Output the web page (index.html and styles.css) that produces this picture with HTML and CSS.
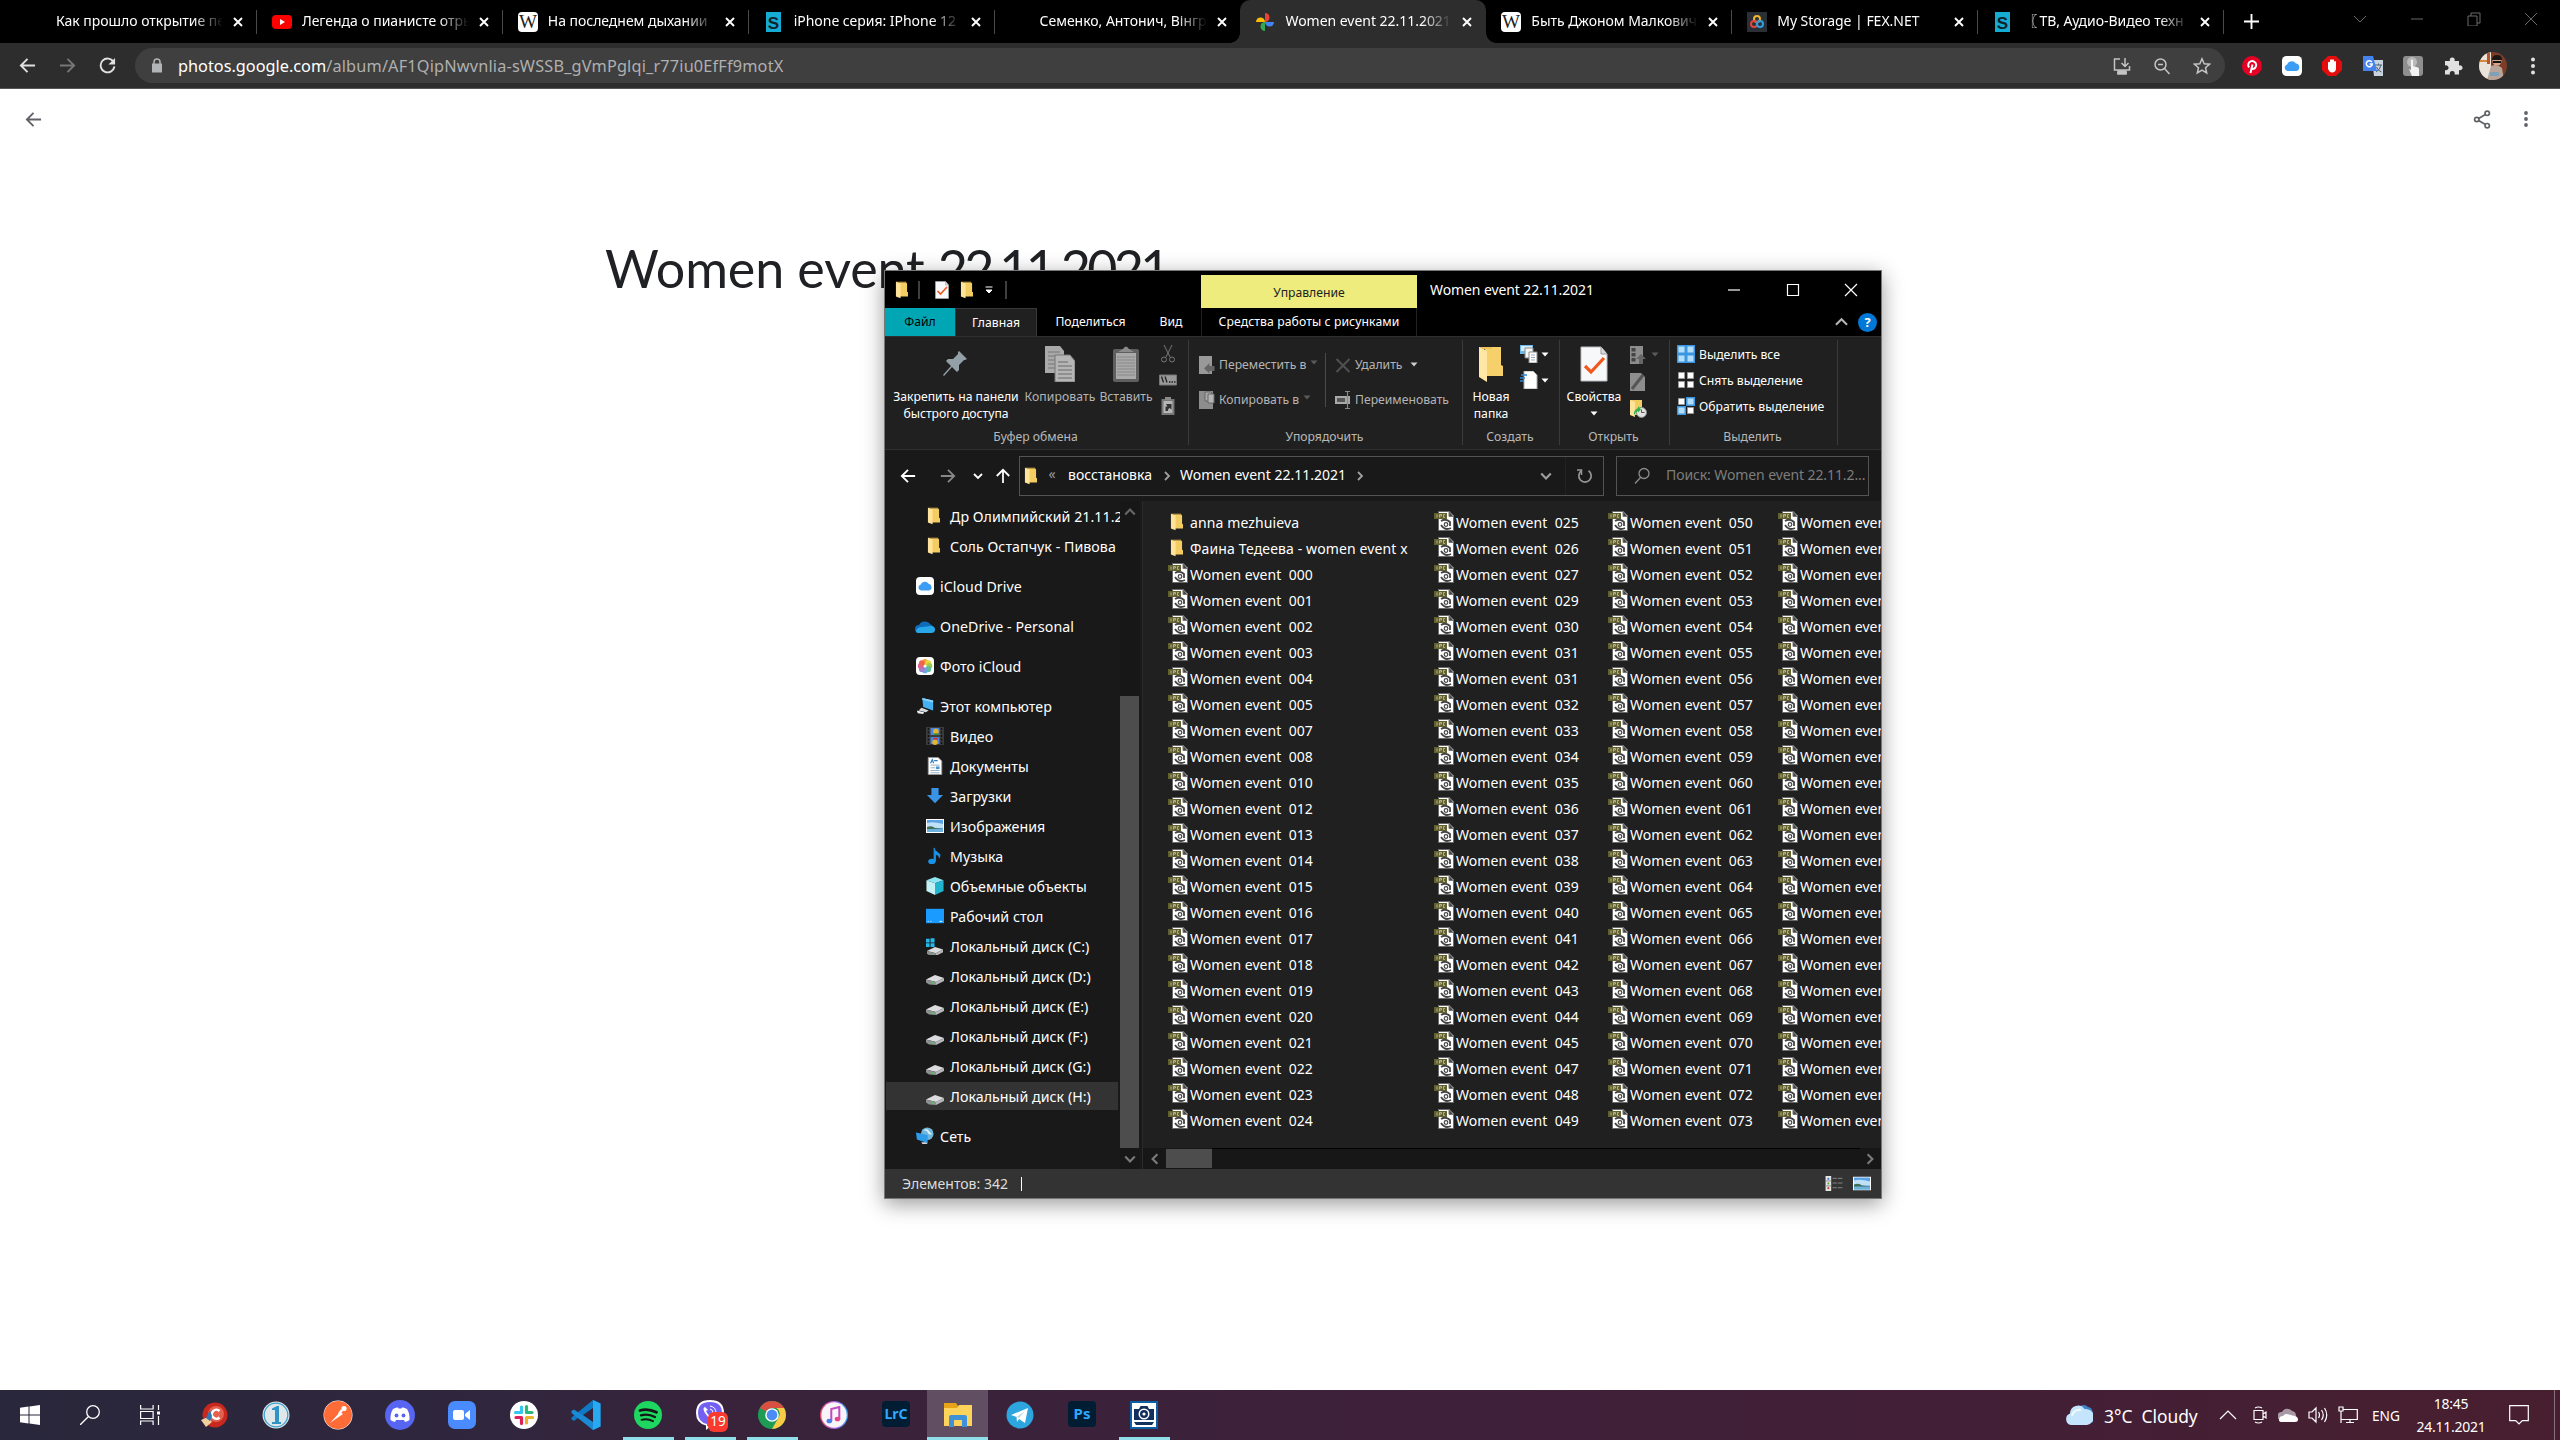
FILE: index.html
```html
<!DOCTYPE html>
<html lang="ru">
<head>
<meta charset="utf-8">
<title>Women event 22.11.2021</title>
<link rel="stylesheet" href="styles.css">
</head>
<body>
<svg class="defs" aria-hidden="true">
  <symbol id="close" viewBox="0 0 10 10"><path d="M1 1l8 8M9 1l-8 8" fill="none" stroke="currentColor" stroke-width="1.9"/></symbol>
  <symbol id="back" viewBox="0 0 18 18"><path d="M17 9H2M9 2L2 9l7 7" fill="none" stroke="currentColor" stroke-width="2"/></symbol>
  <symbol id="wiki" viewBox="0 0 20 20"><rect width="20" height="20" rx="4" fill="#fff"/><text x="10" y="16" text-anchor="middle" font-family="Liberation Serif, serif" font-size="18" textLength="18" lengthAdjust="spacingAndGlyphs" fill="#222">W</text></symbol>
  <symbol id="sshop" viewBox="0 0 20 20"><rect x="2" width="15" height="20" fill="#14acd2"/><text x="9.5" y="16.500" text-anchor="middle" font-family="Liberation Sans, sans-serif" font-weight="700" font-size="17" fill="#10222b">S</text></symbol>
  <symbol id="folder" viewBox="0 0 14 18"><path d="M5 1h7l1 1v9l1 .5V16H5z" fill="#f3cc62"/><path d="M1 0l5 1.500V18L1 16z" fill="#ffe39b"/><path d="M1 0h11v1H4z" fill="#e9bb4f"/></symbol>
  <symbol id="bigfolder" viewBox="0 0 24 36"><path d="M6 1h16v18l2 1v10H7z" fill="#f6d06b"/><path d="M0 1h1l7 4v31l-8-5z" fill="#ffe6a4"/><path d="M1 1h12v2H4z" fill="#eec259"/></symbol>
  <symbol id="checkdoc" viewBox="0 0 28 36"><path d="M1 1h20l6 7v27H1z" fill="#f7f8fa" stroke="#b9bdc1"/><path d="M21 1v7h6" fill="#d7dadd" stroke="#999"/><path d="M5 20l6 6L24 12" fill="none" stroke="#f0581c" stroke-width="3.200"/></symbol>
  <symbol id="caret" viewBox="0 0 8 5"><path d="M.5.5h7L4 4.500z" fill="currentColor"/></symbol>
  <symbol id="chev" viewBox="0 0 10 10"><path d="M1 3l4 4 4-4" fill="none" stroke="currentColor" stroke-width="1.800"/></symbol>
  <symbol id="cloudapp" viewBox="0 0 20 20"><rect width="20" height="20" rx="4.500" fill="#fff"/><path d="M5.500 15A3.300 3.300 0 0 1 5 8.600 5 5 0 0 1 14 7.600 3.800 3.800 0 0 1 14.600 15z" fill="#3c9df5"/></symbol>
  <symbol id="drive" viewBox="0 0 18 14"><path d="M0 8.500L9 4l9 3-8 4z" fill="#dcdcdf"/><path d="M0 8.500L10 11v3l-7-.5-3-2z" fill="#8d8f92"/><path d="M10 11l8-4v3l-8 4z" fill="#b5b7ba"/><circle cx="7" cy="12" r="1" fill="#3fd34e"/></symbol>
  <symbol id="pic" viewBox="0 0 18 14"><rect width="18" height="14" fill="#fff"/><rect x="1" y="1" width="16" height="12" fill="#5ba2e6"/><path d="M1 4q6-2 16 1v4H1z" fill="#bfe0f7"/><path d="M1 8q5-2 8 1l8 1v1H1z" fill="#3f6e54"/><path d="M1 10h16v3H1z" fill="#6db2dc"/></symbol>
</svg>

<header class="browser">
  <div class="tabs">
    <div class="tab"><span class="fav"></span><span class="tt">Как прошло открытие перв</span><svg class="x"><use href="#close"/></svg></div>
    <div class="tab"><svg class="fav" viewBox="0 0 20 20"><rect y="3" width="20" height="14" rx="4" fill="#f00"/><path d="M8 7l5 3-5 3z" fill="#fff"/></svg><span class="tt">Легенда о пианисте отрыв</span><svg class="x"><use href="#close"/></svg></div>
    <div class="tab"><svg class="fav"><use href="#wiki"/></svg><span class="tt">На последнем дыхании</span><svg class="x"><use href="#close"/></svg></div>
    <div class="tab"><svg class="fav"><use href="#sshop"/></svg><span class="tt">iPhone серия: IPhone 12</span><svg class="x"><use href="#close"/></svg></div>
    <div class="tab nosep"><span class="fav"></span><span class="tt">Семенко, Антонич, Вінгран</span><svg class="x"><use href="#close"/></svg></div>
    <div class="tab active"><svg class="fav" viewBox="0 0 20 20"><path d="M10 1a4.500 4.500 0 0 1 0 9z" fill="#ea4335"/><path d="M19 10a4.500 4.500 0 0 1-9 0z" fill="#4285f4"/><path d="M10 19a4.500 4.500 0 0 1 0-9z" fill="#34a853"/><path d="M1 10a4.500 4.500 0 0 1 9 0z" fill="#fbbc04"/></svg><span class="tt">Women event 22.11.2021</span><svg class="x"><use href="#close"/></svg></div>
    <div class="tab"><svg class="fav"><use href="#wiki"/></svg><span class="tt">Быть Джоном Малкович</span><svg class="x"><use href="#close"/></svg></div>
    <div class="tab"><svg class="fav" viewBox="0 0 20 20"><rect width="20" height="20" fill="#2b3036"/><g fill="none" stroke-width="2"><circle cx="10" cy="7" r="3" stroke="#f0b429"/><circle cx="7" cy="12" r="3" stroke="#e8453c"/><circle cx="13" cy="12" r="3" stroke="#2f9fe0"/></g></svg><span class="tt">My Storage | FEX.NET</span><svg class="x"><use href="#close"/></svg></div>
    <div class="tab"><svg class="fav"><use href="#sshop"/></svg><span class="tt">〖&#8201;ТВ, Аудио-Видео техн</span><svg class="x"><use href="#close"/></svg></div>
    <svg class="plus" viewBox="0 0 16 16"><path d="M8 0v16M0 8h16" stroke="#fff" stroke-width="2"/></svg>
    <div class="winctl">
      <svg viewBox="0 0 14 14"><path d="M1 4l6 6 6-6"/></svg>
      <svg viewBox="0 0 14 14"><path d="M1 7h12"/></svg>
      <svg viewBox="0 0 14 14"><path d="M1 4h9v10H1zM4 4V1h9v10h-3"/></svg>
      <svg viewBox="0 0 14 14"><path d="M1 1l12 12M13 1L1 13"/></svg>
    </div>
  </div>
  <div class="toolbar">
    <svg class="tb"><use href="#back"/></svg>
    <svg class="tb dim flip"><use href="#back"/></svg>
    <svg class="tb" viewBox="0 0 18 18"><path d="M15.500 5.500A7.300 7.300 0 1 0 16.300 10" fill="none" stroke="currentColor" stroke-width="2"/><path d="M17 1v7h-7z" fill="currentColor"/></svg>
    <div class="omni">
      <svg class="lock" viewBox="0 0 12 14"><path d="M1 5h10v9H1z" fill="#b2b4b7"/><path d="M3 6V3.500a3 3 0 0 1 6 0V6" fill="none" stroke="#b2b4b7" stroke-width="1.500"/></svg>
      <span class="url"><b>photos.google.com</b><i>/album/AF1QipNwvnlia-sWSSB_gVmPglqi_r77iu0EfFf9motX</i></span>
      <span class="omni-icons">
        <svg viewBox="0 0 18 18"><path d="M7 2H1.500v11H16.500V9M4 16h10M12 1v8M8.500 6l3.500 3.500L15.500 6"/><path d="M5 14h8v3H5z" fill="#c4c4c4"/></svg>
        <svg viewBox="0 0 18 18"><circle cx="7.500" cy="7.500" r="5.500"/><path d="M5 7.500h5M11.500 11.500l5 5.500"/></svg>
        <svg viewBox="0 0 18 18"><path d="M9 1.800l2.200 5 5.300.4-4 3.500 1.200 5.300L9 13.200 4.300 16l1.200-5.300-4-3.500 5.300-.4z"/></svg>
      </span>
    </div>
    <div class="exts">
      <svg viewBox="0 0 20 20"><circle cx="10" cy="10" r="10" fill="#e60023"/><path d="M8.500 17l2-8.500M7 11.500a4 4 0 1 1 3 1.600" fill="none" stroke="#fff" stroke-width="2"/></svg>
      <svg><use href="#cloudapp"/></svg>
      <svg viewBox="0 0 20 20"><path d="M6 0h8l6 6v8l-6 6H6l-6-6V6z" fill="#e40d0d"/><path d="M6 9V6.500q1-1.500 2 0V4q1-1.500 2 0 1-1.500 2 0v1.500q1.500-1 2 .5v6q0 4-3.500 4.500Q8 17 6 13z" fill="#fff"/></svg>
      <svg viewBox="0 0 20 20"><path d="M9 4h11v16h-9z" fill="#c9d3df"/><path d="M0 0h10l4 15H0z" fill="#4683ea"/><path d="M12 9h7M15.500 7.500V9M18 9q-1 5-5 7M13.500 11q1.500 4 5 5" fill="none" stroke="#506070"/><path d="M8.800 6A3 3 0 1 0 9.300 8H6.500" fill="none" stroke="#fff" stroke-width="1.500"/></svg>
      <svg viewBox="0 0 20 20"><rect width="20" height="20" rx="3" fill="#8f8f8f"/><circle cx="9" cy="6" r="5" fill="#b9b9b9"/><path d="M8 4q1-1 2 0v6l5 1.500q1 .5 1 2V20H9l-3-7 2 1z" fill="#f3f3f3"/></svg>
      <svg viewBox="0 0 20 20"><path d="M2 5h5a2.500 2.500 0 1 1 4.500 0H16v4.500a2.500 2.500 0 1 1 0 4.500v4.500h-4.500a2.500 2.500 0 1 0-4.500 0H2V14a2.500 2.500 0 1 0 0-4.500z" fill="#e0e0e0"/></svg>
      <svg class="ava" viewBox="0 0 28 28"><clipPath id="av"><circle cx="14" cy="14" r="14"/></clipPath><g clip-path="url(#av)"><path d="M0 0h28v28H0z" fill="#7c3c28"/><path d="M0 0h12v28H0z" fill="#e9e3da"/><path d="M1 8h9v2H1z" fill="#d7863c"/><path d="M8 0h3v12H8z" fill="#b5552c"/><path d="M12 14q6-3 11 2l2 12H8z" fill="#b9a49a"/><circle cx="18" cy="9" r="4.500" fill="#d7a88c"/><path d="M13 8q0-5 5-5t5 5z" fill="#1d1714"/><path d="M14 9h8v2h-8z" fill="#111"/><path d="M11 20h9v4h-9z" fill="#7fa0b5"/></g></svg>
      <svg viewBox="0 0 20 20"><g fill="#e0e0e0"><circle cx="10" cy="3.500" r="2"/><circle cx="10" cy="10" r="2"/><circle cx="10" cy="16.500" r="2"/></g></svg>
    </div>
  </div>
</header>

<main class="page">
  <div class="appbar">
    <svg class="pback"><use href="#back"/></svg>
    <svg class="share" viewBox="0 0 18 20"><g fill="none" stroke="#5f6368" stroke-width="1.800"><circle cx="14.500" cy="3.500" r="2.300"/><circle cx="3.500" cy="10" r="2.300"/><circle cx="14.500" cy="16.500" r="2.300"/><path d="M5.500 9l7-4.200M5.500 11l7 4.300"/></g></svg>
    <svg class="more" viewBox="0 0 6 18"><g fill="#5f6368"><circle cx="3" cy="3" r="1.900"/><circle cx="3" cy="9" r="1.900"/><circle cx="3" cy="15" r="1.900"/></g></svg>
  </div>
  <h1>Women event <span class="date">22.11.2021</span></h1>
</main>

<section class="explorer">
  <div class="titlebar">
    <div class="qat">
      <svg class="f"><use href="#folder"/></svg><i class="bar"></i>
      <svg class="d"><use href="#checkdoc"/></svg>
      <svg class="f"><use href="#folder"/></svg>
      <svg class="drop" viewBox="0 0 8 8"><path d="M.5 1h7M1 4h6L4 7z" fill="#fff" stroke="#fff"/></svg><i class="bar"></i>
    </div>
    <div class="ctx">Управление</div>
    <div class="wtitle">Women event 22.11.2021</div>
    <div class="wctl">
      <svg viewBox="0 0 14 14"><path d="M1 7h12"/></svg>
      <svg viewBox="0 0 14 14"><path d="M1.500 1.500h11v11h-11z"/></svg>
      <svg viewBox="0 0 14 14"><path d="M1 1l12 12M13 1L1 13"/></svg>
    </div>
  </div>
  <div class="rtabs">
    <span class="file">Файл</span><span class="home">Главная</span><span class="sharetab">Поделиться</span><span class="view">Вид</span><span class="tools">Средства работы с рисунками</span>
    <svg class="fold" viewBox="0 0 14 10"><path d="M1 8l6-6 6 6" fill="none" stroke="#b5b5b5" stroke-width="2.200"/></svg>
    <span class="help">?</span>
  </div>
  <div class="ribbon">
    <div class="grp g1">
      <div class="body">
        <div class="big pin"><svg viewBox="0 0 30 36"><path d="M18 5l8 8-2 1-1 0-5 5 0 5-2 2-5-5-8 9-1-1 8-9-5-5 2-2h5l5-5V6z" fill="#93a0a8"/></svg><span>Закрепить на панели быстрого доступа</span></div>
        <div class="big copy off"><svg viewBox="0 0 30 36"><path d="M0 0h15l4 5v22H0z" fill="#a9a9a9"/><path d="M3 6h12M3 10h12M3 14h8M3 18h8M3 22h8" stroke="#777"/><path d="M10 9h15l5 6v21H10z" fill="#b5b5b5" stroke="#777"/><path d="M13 16h10M13 20h14M13 24h14M13 28h14M13 32h14" stroke="#6a6a6a"/></svg><span>Копировать</span></div>
        <div class="big paste off"><svg viewBox="0 0 26 36"><rect y="3" width="26" height="33" rx="2" fill="#5f5f5f"/><path d="M3 7h20v26H3z" fill="#aaa"/><path d="M5 6l5-3q3-5 6 0l5 3z" fill="#8b8b8b"/><path d="M4 11h18M4 14h18M4 17h18M4 20h18M4 23h18M4 26h18M4 29h18" stroke="#888"/></svg><span>Вставить</span></div>
        <div class="mini cuts">
          <svg viewBox="0 0 18 18"><g fill="none" stroke="#777"><path d="M5 0l6 12M13 0L7 12"/><circle cx="5" cy="14.500" r="2.500"/><circle cx="13" cy="14.500" r="2.500"/></g></svg>
          <svg viewBox="0 0 18 18"><path d="M.5 4h17v10H.5z" fill="#999" stroke="#777"/><path d="M2.500 5.500l2 6M6 5.500l2 6M10 11h1.500M12.500 11H14M15 11h1.500" stroke="#222" stroke-width="1.300"/></svg>
          <svg viewBox="0 0 18 18"><path d="M2.500 2h13v16h-13z" fill="#777"/><path d="M4.500 4h9v12h-9z" fill="#b5b5b5"/><path d="M6 0h6v3H6z" fill="#8a8a8a"/><path d="M6.500 14V9.500h2L7 7h5.500v5.500L10.500 11q-2 1-1.500 3z" fill="#333"/></svg>
        </div>
      </div>
      <div class="glabel">Буфер обмена</div>
    </div>
    <div class="grp g2">
      <div class="body">
        <div class="rows left off">
          <div><svg viewBox="0 0 16 18"><path d="M0 0h13v18H0z" fill="#999"/><path d="M15.500 10h-5V7L5 12.500l5.500 5V15h5z" fill="#666"/></svg>Переместить в<svg class="car"><use href="#caret"/></svg></div>
          <div><svg viewBox="0 0 16 18"><path d="M0 0h14v18H0z" fill="#8d8d8d"/><path d="M6 1h6l1 1v8H6z" fill="#aaa" stroke="#666"/><path d="M9 3h6v9H9z" fill="#b5b5b5" stroke="#666"/></svg>Копировать в<svg class="car"><use href="#caret"/></svg></div>
        </div>
        <div class="rows right off">
          <div><svg viewBox="0 0 16 18"><path d="M1.500 3l13 13M14.500 3l-13 13" stroke="#505050" stroke-width="2"/></svg>Удалить<svg class="car lit"><use href="#caret"/></svg></div>
          <div><svg viewBox="0 0 16 18"><path d="M0 5h15v8H0z" fill="#a9a9a9"/><path d="M2 7h8v4H2z" fill="#555"/><path d="M12.500 1v16M10 .5h5M10 17.500h5" stroke="#888" stroke-width="1.200"/></svg>Переименовать</div>
        </div>
      </div>
      <div class="glabel">Упорядочить</div>
    </div>
    <div class="grp g3">
      <div class="body">
        <div class="big"><svg viewBox="0 0 24 36"><use href="#bigfolder"/></svg><span>Новая папка</span></div>
        <div class="mini wide">
          <div><svg viewBox="0 0 18 18"><path d="M0 0h13v9H0z" fill="#6db7e8"/><path d="M1 1h11v5H1z" fill="#d4ecfa"/><path d="M5 3h8v10H5z" fill="#f4f4f4" stroke="#888"/><path d="M9 7h8v11H9z" fill="#fff" stroke="#888"/><path d="M11 10h4M11 12.500h4M11 15h4" stroke="#9ab"/></svg><svg class="car"><use href="#caret"/></svg></div>
          <div><svg viewBox="0 0 18 18"><path d="M4 0h9l4 4v14H4z" fill="#fff" stroke="#aaa"/><path d="M1 4h6M0 7h5M0 10h4" stroke="#2a86d8" stroke-width="1.600"/></svg><svg class="car"><use href="#caret"/></svg></div>
        </div>
      </div>
      <div class="glabel">Создать</div>
    </div>
    <div class="grp g4">
      <div class="body">
        <div class="big"><svg viewBox="0 0 28 36"><use href="#checkdoc"/></svg><span>Свойства</span><svg class="car"><use href="#caret"/></svg></div>
        <div class="mini wide tall">
          <div class="off"><svg viewBox="0 0 18 18"><path d="M1 0h13v18H1z" fill="#8d8d8d"/><path d="M2.500 2h4v3.500h-4zM2.500 7h4v3.500h-4zM2.500 12h4v3.500h-4z" fill="#444"/><path d="M10 18v-5H7l5-5 5 5h-3v5z" fill="#666"/></svg><svg class="car"><use href="#caret"/></svg></div>
          <div><svg viewBox="0 0 18 18"><path d="M1 0h11l4 4v14H1z" fill="#8d8d8d"/><path d="M3 16L14 2" stroke="#555" stroke-width="3"/></svg></div>
          <div><svg viewBox="0 0 18 18"><path d="M1 0h12v15H1z" fill="#f3cc62"/><path d="M1 0l5 2v15l-5-2z" fill="#ffe39b"/><circle cx="12.500" cy="12.500" r="5" fill="#e2e2e2" stroke="#888"/><path d="M12.500 9.500v3h3" stroke="#555" fill="none"/><path d="M5 16q-1-6 4-8V6l3 3.500-3 3V11q-3 1-4 5z" fill="#35b24a"/></svg></div>
        </div>
      </div>
      <div class="glabel">Открыть</div>
    </div>
    <div class="grp g5">
      <div class="body">
        <div class="rows sel">
          <div><svg viewBox="0 0 18 18"><path d="M0 0h18v18H0z" fill="#3a96e0"/><path d="M1.500 1.500h6v6h-6zM10.500 1.500h6v6h-6zM1.500 10.500h6v6h-6zM10.500 10.500h6v6h-6z" fill="#b5defa"/></svg>Выделить все</div>
          <div><svg viewBox="0 0 18 18"><path d="M1.500 1.500h6v6h-6zM10.500 1.500h6v6h-6zM1.500 10.500h6v6h-6zM10.500 10.500h6v6h-6z" fill="#fff" stroke="#999"/></svg>Снять выделение</div>
          <div><svg viewBox="0 0 18 18"><path d="M9 0h9v9H9zM0 9h9v9H0z" fill="#3a96e0"/><path d="M10.500 1.500h6v6h-6zM1.500 10.500h6v6h-6z" fill="#b5defa"/><path d="M1.500 1.500h6v6h-6zM10.500 10.500h6v6h-6z" fill="#fff" stroke="#999"/></svg>Обратить выделение</div>
        </div>
      </div>
      <div class="glabel">Выделить</div>
    </div>
  </div>
  <div class="navbar">
    <svg class="n1"><use href="#back"/></svg>
    <svg class="n2 flip"><use href="#back"/></svg>
    <svg class="n3"><use href="#chev"/></svg>
    <svg class="n4 up"><use href="#back"/></svg>
    <div class="addr">
      <svg class="f"><use href="#folder"/></svg><span class="laq">«</span><span>восстановка</span>
      <svg class="sep1"><use href="#chev"/></svg><span>Women event 22.11.2021</span><svg class="sep2"><use href="#chev"/></svg>
      <svg class="dd"><use href="#chev"/></svg>
      <div class="refresh"><svg viewBox="0 0 16 16"><path d="M4.500 2.800A6.200 6.200 0 1 0 11.500 2.800" fill="none" stroke="#969696" stroke-width="1.700"/><path d="M4.500 7V2H0" fill="none" stroke="#969696" stroke-width="1.500"/></svg></div>
    </div>
    <div class="search"><svg viewBox="0 0 18 18"><circle cx="11" cy="6.500" r="5" fill="none" stroke="#8c8c8c" stroke-width="1.300"/><path d="M7.500 10.500L2 16.500" stroke="#8c8c8c" stroke-width="1.300"/></svg><span>Поиск: Women event 22.11.2...</span></div>
  </div>
  <div class="content">
    <nav class="side">
      <ul>
        <li class="sub"><svg class="fi"><use href="#folder"/></svg><span>Др Олимпийский 21.11.2</span></li>
        <li class="sub"><svg class="fi"><use href="#folder"/></svg><span>Соль Остапчук - Пивова</span></li>
        <li class="top"><svg><use href="#cloudapp"/></svg><span>iCloud Drive</span></li>
        <li class="top"><svg class="od" viewBox="0 1 20 15"><path d="M4 15a4 4 0 0 1 0-8 6.500 6.500 0 0 1 11-1 5 5 0 0 1 1 9z" fill="#0f6cbd"/><path d="M1 14q0-5 7-5l8-1q4 0 4 3.500T16 15H4q-2 0-3-1z" fill="#28a8ea"/></svg><span>OneDrive - Personal</span></li>
        <li class="top"><svg viewBox="0 0 20 20"><rect width="20" height="20" rx="4.500" fill="#fff"/><g opacity=".9"><circle cx="10" cy="5.300" r="3.200" fill="#f79c1d"/><circle cx="13.600" cy="6.700" r="3.200" fill="#e2d420"/><circle cx="14.900" cy="10" r="3.200" fill="#8cc63f"/><circle cx="13.600" cy="13.500" r="3.200" fill="#4fb58e"/><circle cx="10" cy="14.900" r="3.200" fill="#5a9fe0"/><circle cx="6.500" cy="13.500" r="3.200" fill="#9274c8"/><circle cx="5.200" cy="10" r="3.200" fill="#d4578f"/><circle cx="6.500" cy="6.700" r="3.200" fill="#f0523d"/></g></svg><span>Фото iCloud</span></li>
        <li class="top"><svg viewBox="0 0 20 20"><path d="M7 1l12 3v11L8 11z" fill="#45b0f2"/><path d="M7 1l12 3v2L7 3z" fill="#8bd3fb"/><path d="M6 12l8 3-3 2-8-2z" fill="#d7dde2"/><path d="M1 15l8 2-1 2-6-1z" fill="#f2f2f2"/></svg><span>Этот компьютер</span></li>
        <li class="sub"><svg viewBox="0 0 20 20"><path d="M0 0h20v20H0z" fill="#3b3b3b"/><path d="M2 2h1.500M2 6h1.500M2 10h1.500M2 14h1.500M2 18h1.500M16.500 2H18M16.500 6H18M16.500 10H18M16.500 14H18M16.500 18H18" stroke="#111" stroke-width="2"/><path d="M5 1h10v8H5zM5 11h10v8H5z" fill="#4c86dc"/><circle cx="11" cy="5" r="3" fill="#e6b52d"/><path d="M9 7h5v2H9z" fill="#3d8b37"/><circle cx="10" cy="17" r="3" fill="#e6b52d"/><path d="M8 12h5v2H8z" fill="#c33"/></svg><span>Видео</span></li>
        <li class="sub"><svg viewBox="0 0 20 20"><path d="M2.500.5h11l4 4v15h-15z" fill="#fff" stroke="#999"/><path d="M5 9h10M5 12h5M5 15h10M5 17.500h10" stroke="#88a7bd"/><path d="M5 7l2-4 1.500 4M9 4h4" fill="none" stroke="#2c7cc0" stroke-width="1.300"/><path d="M11 10.500h4v3h-4z" fill="#4a94cf"/></svg><span>Документы</span></li>
        <li class="sub"><svg viewBox="0 0 20 20"><path d="M6 1h8v8h5l-9 9-9-9h5z" fill="#3a93e4"/></svg><span>Загрузки</span></li>
        <li class="sub"><svg viewBox="0 0 18 14"><use href="#pic"/></svg><span>Изображения</span></li>
        <li class="sub"><svg viewBox="0 0 20 20"><ellipse cx="6.500" cy="16" rx="4" ry="3" fill="#1893e8"/><path d="M9 16V1q0 3 4 5t2 6q0-3-4.500-4V16z" fill="#1893e8" stroke="#1893e8"/></svg><span>Музыка</span></li>
        <li class="sub"><svg viewBox="0 0 20 20"><path d="M10 0l9.500 3.500L10 7 .5 3.500z" fill="#8fe6f2"/><path d="M.5 3.500L10 7v13L.5 15.500z" fill="#c3f1f5"/><path d="M19.500 3.500L10 7v13l9.500-4.500z" fill="#22b5cf"/></svg><span>Объемные объекты</span></li>
        <li class="sub"><svg viewBox="0 0 20 16"><path d="M0 0h20v16H0z" fill="#1a9bff"/><path d="M2 14h1M5 14h1M15 14h3" stroke="#fff"/></svg><span>Рабочий стол</span></li>
        <li class="sub"><svg viewBox="0 0 20 20"><path d="M0 2h4v4H0zM5 1.500h4.500V6H5zM0 7h4v4H0zM5 7h4.500v4H5z" fill="#25b8ea"/><svg x="1" y="5" width="19" height="14"><use href="#drive"/></svg></svg><span>Локальный диск (C:)</span></li>
        <li class="sub"><svg class="low"><use href="#drive"/></svg><span>Локальный диск (D:)</span></li>
        <li class="sub"><svg class="low"><use href="#drive"/></svg><span>Локальный диск (E:)</span></li>
        <li class="sub"><svg class="low"><use href="#drive"/></svg><span>Локальный диск (F:)</span></li>
        <li class="sub"><svg class="low"><use href="#drive"/></svg><span>Локальный диск (G:)</span></li>
        <li class="sub cur"><svg class="low"><use href="#drive"/></svg><span>Локальный диск (H:)</span></li>
        <li class="top"><svg viewBox="0 0 20 20"><circle cx="12.500" cy="7.500" r="7" fill="#6fb6dc"/><path d="M8 4q4-3 6 0t4 4q-4 1-5-2t-5-2z" fill="#dff1f8"/><path d="M0 6l13 3v9L1 14z" fill="#2e9be8"/><path d="M6 17h5l2 2H7z" fill="#d0d7dc"/></svg><span>Сеть</span></li>
      </ul>
      <div class="vscroll"><svg class="vup"><use href="#chev"/></svg><div class="vthumb"></div><svg><use href="#chev"/></svg></div>
    </nav>
    <div class="main">
      <div class="files">
        <ul>
          <li class="dir">anna mezhuieva</li><li class="dir">Фаина Тедеева - women event x</li>
          <li>Women event  000</li><li>Women event  001</li><li>Women event  002</li><li>Women event  003</li><li>Women event  004</li><li>Women event  005</li><li>Women event  007</li><li>Women event  008</li><li>Women event  010</li><li>Women event  012</li><li>Women event  013</li><li>Women event  014</li><li>Women event  015</li><li>Women event  016</li><li>Women event  017</li><li>Women event  018</li><li>Women event  019</li><li>Women event  020</li><li>Women event  021</li><li>Women event  022</li><li>Women event  023</li><li>Women event  024</li>
        </ul>
        <ul>
          <li>Women event  025</li><li>Women event  026</li><li>Women event  027</li><li>Women event  029</li><li>Women event  030</li><li>Women event  031</li><li>Women event  031</li><li>Women event  032</li><li>Women event  033</li><li>Women event  034</li><li>Women event  035</li><li>Women event  036</li><li>Women event  037</li><li>Women event  038</li><li>Women event  039</li><li>Women event  040</li><li>Women event  041</li><li>Women event  042</li><li>Women event  043</li><li>Women event  044</li><li>Women event  045</li><li>Women event  047</li><li>Women event  048</li><li>Women event  049</li>
        </ul>
        <ul>
          <li>Women event  050</li><li>Women event  051</li><li>Women event  052</li><li>Women event  053</li><li>Women event  054</li><li>Women event  055</li><li>Women event  056</li><li>Women event  057</li><li>Women event  058</li><li>Women event  059</li><li>Women event  060</li><li>Women event  061</li><li>Women event  062</li><li>Women event  063</li><li>Women event  064</li><li>Women event  065</li><li>Women event  066</li><li>Women event  067</li><li>Women event  068</li><li>Women event  069</li><li>Women event  070</li><li>Women event  071</li><li>Women event  072</li><li>Women event  073</li>
        </ul>
        <ul>
          <li>Women event</li><li>Women event</li><li>Women event</li><li>Women event</li><li>Women event</li><li>Women event</li><li>Women event</li><li>Women event</li><li>Women event</li><li>Women event</li><li>Women event</li><li>Women event</li><li>Women event</li><li>Women event</li><li>Women event</li><li>Women event</li><li>Women event</li><li>Women event</li><li>Women event</li><li>Women event</li><li>Women event</li><li>Women event</li><li>Women event</li><li>Women event</li>
        </ul>
      </div>
      <div class="hscroll"><svg class="hl"><use href="#chev"/></svg><div class="hthumb"></div><div class="htrack"></div><svg class="hr"><use href="#chev"/></svg></div>
    </div>
  </div>
  <div class="status">
    <span>Элементов: 342</span><i></i>
    <svg viewBox="0 0 18 16"><path d="M0 0h6v16H0z" fill="#e6e6e6"/><path d="M0 5.300h6M0 10.600h6" stroke="#888"/><path d="M2 2h2v2H2z" fill="#3a7bd0"/><path d="M2 7h2v2H2z" fill="#5a9e3a"/><path d="M2 12h2v2H2z" fill="#c0392b"/><path d="M7.500 2.500H12M13 2.500h5M7.500 7.500H12M13 7.500h5M7.500 12.500H12M13 12.500h5" stroke="#8a8a8a"/></svg>
    <svg viewBox="0 0 18 14"><use href="#pic"/></svg>
  </div>
</section>

<footer class="taskbar">
  <div class="sys">
    <svg viewBox="0 0 20 20"><path d="M0 2.800l8.500-1.200V9.500H0zM9.500 1.500L20 0v9.500H9.500zM0 10.500h8.500v7.900L0 17.200zM9.500 10.500H20V20L9.500 18.500z" fill="#fff"/></svg>
    <svg viewBox="0 0 20 20"><g fill="none" stroke="#fff" stroke-width="1.300"><circle cx="13" cy="7" r="6.300"/><path d="M8.500 11.500L0 20"/></g></svg>
    <svg viewBox="0 0 20 20"><g fill="none" stroke="#fff" stroke-width="1.200"><path d="M.6 0v4h12.500V0M.6 20v-4h12.500v4M.6 6.500h12.500v7H.6zM18.500 0v5M18.500 11v9"/></g><path d="M17 6.500h3v3h-3z" fill="#fff"/></svg>
  </div>
  <div class="apps">
    <div><svg viewBox="0 0 30 30"><circle cx="16" cy="15" r="12.500" fill="#c9281e"/><circle cx="17" cy="14" r="8" fill="#e4604f"/><path d="M20.500 11a4.500 4.500 0 1 0 0 6.500" fill="none" stroke="#fff" stroke-width="2.500"/><path d="M2 20l7-3 4 5-6 5z" fill="#f0cfa0"/><path d="M7 18l4-8 2 6-2 5z" fill="#2f77b5"/></svg></div>
    <div><svg viewBox="0 0 30 30"><circle cx="15" cy="15" r="13.500" fill="#dfe7ea"/><circle cx="15" cy="15" r="11.800" fill="none" stroke="#3ea2cf" stroke-width="1.300"/><path d="M11 8.500l5-2.500h2v16h2v2h-9v-2h3V10h-3z" fill="#2f93c4"/></svg></div>
    <div><svg viewBox="0 0 30 30"><circle cx="15" cy="15" r="14.500" fill="#fff"/><circle cx="15" cy="15" r="14" fill="#ff6c37"/><path d="M7 23l10-11 3 2z" fill="#fff"/><circle cx="21" cy="8.500" r="2.600" fill="#fff"/><path d="M16 14l3-4" stroke="#fff" stroke-width="2.500"/></svg></div>
    <div><svg viewBox="0 0 30 30"><circle cx="15" cy="15" r="15" fill="#5865f2"/><path d="M8 9q3-2 5-1.500l.5 1h3l.5-1q2-.5 5 1.500 3 5 2.500 11-2 1.500-4.500 2l-1-2h-8l-1 2q-2.500-.5-4.500-2Q5 14 8 9z" fill="#fff"/><circle cx="11.500" cy="15.500" r="1.900" fill="#5865f2"/><circle cx="18.500" cy="15.500" r="1.900" fill="#5865f2"/></svg></div>
    <div><svg viewBox="0 0 30 30"><rect x="1" y="1" width="28" height="28" rx="7" fill="#4a8cff"/><rect x="6" y="10" width="11" height="10" rx="2" fill="#fff"/><path d="M18 14l5-4v10l-5-4z" fill="#fff"/></svg></div>
    <div><svg viewBox="0 0 30 30"><circle cx="15" cy="15" r="14" fill="#fff"/><g stroke-width="3.200" stroke-linecap="round"><path d="M12.500 7v5M6.500 12.500h6" stroke="#36c5f0"/><path d="M17.500 6.500v6M18 12.500h5" stroke="#2eb67d"/><path d="M17.500 18v5M17.500 17.500h6" stroke="#ecb22e"/><path d="M12.500 17.500v6M7 17.500h5" stroke="#e01e5a"/></g></svg></div>
    <div><svg viewBox="0 0 30 30"><path d="M22 0l7.500 3.500v23L22 30 8 17l-5 4-2.500-1.500v-2L22 0z" fill="#0f7ac4"/><path d="M.5 11L3 9.500 22 22v8L.5 13z" fill="#1a8ad4"/><path d="M22 8L12 15l10 7z" fill="#33223a"/><path d="M22 0l7.500 3.500v23L22 30z" fill="#29a9f0"/></svg></div>
    <div class="run"><svg viewBox="0 0 30 30"><circle cx="15" cy="15" r="14" fill="#1ed760"/><g fill="none" stroke="#151515" stroke-linecap="round"><path d="M7 10.500q8-2.500 16.500 1.800" stroke-width="2.800"/><path d="M8 15.300q7-2 14 1.700" stroke-width="2.300"/><path d="M8.500 19.800q6-1.600 11.500 1.400" stroke-width="1.900"/></g></svg></div>
    <div class="run"><svg viewBox="0 0 30 30"><path d="M15 0q14 0 14 13t-13 13l-5 4v-4.500Q1 23 1 13 1 0 15 0z" fill="#fff"/><path d="M15 2q12 0 12 11T15 24l-3 2.500V24Q3 22 3 13 3 2 15 2z" fill="#7360f2"/><path d="M10 7q-3 1 0 6t7 7q3 0 3-3l-3-2-2 1q-3-2-4-5l2-1z" fill="#fff"/><path d="M15 6q6 1 6 7M15 9q3 .5 3 4" fill="none" stroke="#fff"/></svg><em class="badge">19</em></div>
    <div class="run"><svg viewBox="0 0 30 30"><circle cx="15" cy="15" r="14" fill="#1e9c56"/><path d="M15 1a14 14 0 0 1 12.100 7H15a7 7 0 0 0-6.100 3.500L3 8A14 14 0 0 1 15 1z" fill="#d94f42"/><path d="M27.100 8A14 14 0 0 1 15 29l6-10.500A7 7 0 0 0 19.500 8z" fill="#fccb45"/><circle cx="15" cy="15" r="6.800" fill="#fff"/><circle cx="15" cy="15" r="5.400" fill="#4b8bf5"/></svg></div>
    <div><svg viewBox="0 0 30 30"><linearGradient id="it" x1="0" y1="0" x2="1" y2="0"><stop offset="0" stop-color="#e9496c"/><stop offset=".5" stop-color="#b05be0"/><stop offset="1" stop-color="#33a7f2"/></linearGradient><circle cx="15" cy="15" r="14" fill="url(#it)"/><circle cx="15" cy="15" r="12.700" fill="#f8f4f8"/><path d="M12.300 21V9l8-2v12" fill="none" stroke="#c04ac0" stroke-width="2"/><ellipse cx="10.300" cy="21" rx="2.800" ry="2.300" fill="#4b7ee8"/><ellipse cx="18.500" cy="19" rx="2.800" ry="2.300" fill="#e04888"/></svg></div>
    <div><svg viewBox="0 0 30 30"><rect x="1" y="1" width="28" height="26" rx="4" fill="#001d33"/><text class="adobe" x="15" y="18.500" textLength="23">LrC</text></svg></div>
    <div class="run on"><svg viewBox="0 0 30 30"><path d="M1 3h12l2 3h14v20H1z" fill="#e8a317"/><path d="M1 8h13l2-3h13v21H1z" fill="#fdd35c"/><path d="M6 27V17q0-2 2-2h14q2 0 2 2v10h-5v-7h-8v7z" fill="#3f92d8"/></svg></div>
    <div><svg viewBox="0 0 30 30"><circle cx="15" cy="15" r="13.500" fill="#2da5df"/><path d="M6 15l17-7-3 15-6-4-2 3-.5-5z" fill="#fff"/><path d="M11.500 17L20 11l-6 7z" fill="#b9dcef"/></svg></div>
    <div><svg viewBox="0 0 30 30"><rect x="1" y="1" width="28" height="26" rx="4" fill="#001d33"/><text class="adobe ps" x="15" y="19">Ps</text></svg></div>
    <div class="run"><svg viewBox="0 0 30 30"><rect x="1" y="1" width="28" height="28" fill="#0c5fa5"/><rect x="3" y="3" width="24" height="24" fill="#fff"/><path d="M5 9h5l1.500-3h7L20 9h5v11H5z" fill="#12305e"/><circle cx="15" cy="14" r="5.500" fill="#fff"/><circle cx="15" cy="14" r="4" fill="#12305e"/><circle cx="15" cy="14" r="1.600" fill="#fff"/><path d="M5 22h20l-2 3H7z" fill="#12305e"/></svg></div>
  </div>
  <div class="tray">
    <svg class="wx" viewBox="0 0 28 20"><path d="M13 8a6 6 0 0 1 10-6q4 0 5 6v9l-6 2z" fill="#3f84c9"/><path d="M6 20a6 6 0 0 1-1-11.500A8 8 0 0 1 19.500 4 8 8 0 0 1 22 20z" fill="#c4e5fb"/><path d="M7 11q2-7 9-6" stroke="#eef8ff" stroke-width="2" fill="none"/></svg>
    <span class="temp">3°C  Cloudy</span>
    <svg class="t1" viewBox="0 0 18 10"><path d="M1 9l8-8 8 8"/></svg>
    <svg class="t2" viewBox="0 0 18 18"><path d="M2 4.500h9v9H2zM11 8l3-2v6l-3-2M3 2q3.500-2 7 0M3 16q3.500 2 7 0"/></svg>
    <svg class="t3" viewBox="0 0 20 14"><path d="M3 12a4 4 0 0 1 1-8 6 6 0 0 1 10-1 5 5 0 0 1 4 5z" fill="#a899a6" stroke="none"/><path d="M1 12q0-4 4-4 2-3 6-1.500 4 1 6 1.500 3 1 3 3.500T17 14H4q-3 0-3-2z" fill="#fff" stroke="none"/></svg>
    <svg class="t4" viewBox="0 0 20 18"><path d="M1 6h3l4-4v14l-4-4H1zM10.500 6q2 3 0 6M13.500 4q3.500 5 0 10M16.500 2q4.500 7 0 14"/></svg>
    <svg class="t5" viewBox="0 0 20 18"><path d="M5 3.500h14.300v10H3V7M8 16.500h8M12 13.500v3M1 1h4v4H1zM3 5v12"/></svg>
    <span class="lang">ENG</span>
    <span class="clock"><span>18:45</span><span>24.11.2021</span></span>
    <svg class="t6" viewBox="0 0 20 20"><path d="M.7.700h18.600v15h-6L10 19l-3.300-3.300h-6z"/></svg>
    <i class="peek"></i>
  </div>
</footer>
</body>
</html>
```
FILE: styles.css
```css
*{box-sizing:border-box}
html,body{margin:0;height:100%}
body{width:2560px;height:1440px;overflow:hidden;background:#fff;font-family:"Noto Sans","Noto Sans CJK SC",sans-serif;font-size:14px;display:flex;flex-direction:column;position:relative}
ul{list-style:none;margin:0;padding:0}
i,em{font-style:normal}
svg{display:block;flex:none}
.defs{position:absolute;width:0;height:0}
.flip{transform:scaleX(-1)}

/* browser chrome */
.browser{height:89px;flex:none;border-bottom:1px solid #555;background:#2d2d2d;color:#fff}
.tabs{height:43px;background:#000;display:flex;align-items:center;padding-left:11px}
.tab{width:245.900px;height:43px;flex:none;display:flex;align-items:center;padding-left:15px;position:relative}
.tab::after{content:"";position:absolute;right:0;top:10px;width:1px;height:24px;background:#4a4a4a}
.tab.nosep::after{display:none}
.fav{width:20px;height:20px;flex:none}
.tt{width:167px;margin:0 10px;padding-bottom:1px;overflow:hidden;white-space:nowrap;letter-spacing:-.03px;line-height:24px;-webkit-mask-image:linear-gradient(90deg,#000 82%,transparent);mask-image:linear-gradient(90deg,#000 82%,transparent)}
.x{width:10px;height:10px}
.active{background:#2d2d2d;border-radius:10px 10px 0 0}
.active::before,.tab.active::after{content:"";position:absolute;bottom:0;top:auto;width:10px;height:10px;background:radial-gradient(circle at 0 0,#000 9.500px,#2d2d2d 10px)}
.active::before{left:-10px}
.tab.active::after{right:-10px;background:radial-gradient(circle at 100% 0,#000 9.500px,#2d2d2d 10px)}
.plus{width:15px;height:15px;margin-left:20px}
.winctl{margin-left:auto;display:flex;gap:43px;margin-right:22px;padding-bottom:6px}
.winctl svg{width:14px;height:14px;fill:none;stroke:#6a6a6a}
.toolbar{height:45px;display:flex;align-items:center}
.tb{width:17px;height:17px;margin-left:19px;margin-right:4px;color:#e0e0e0}
.tb.dim{color:#777}
.tb+.tb{margin-left:19px}
.omni{width:2090px;height:35px;margin-left:15px;border-radius:18px;background:#3f3f3f;display:flex;align-items:center}
.lock{width:12px;height:15px;margin-left:16px}
.url{margin-left:15px;font-size:16.300px;white-space:nowrap}
.url b{font-weight:400}
.url i{color:#b0b0b0;letter-spacing:.170px}
.omni-icons{margin-left:auto;margin-right:14px;display:flex;gap:22px}
.omni-icons svg{width:18px;height:18px;fill:none;stroke:#c4c4c4;stroke-width:1.500}
.exts{display:flex;align-items:center;gap:20.200px;margin-left:17px}
.exts svg{width:20px;height:20px}
.exts .ava{width:28px;height:28px;margin:0 -4px}

/* album page */
.appbar{height:60px;display:flex;align-items:center;color:#5f6368}
.pback{width:17px;height:17px;margin-left:25px}
.share{width:18px;height:19px;margin-left:auto}
.more{width:6px;height:18px;margin:0 31px 0 32px}
.page h1{margin:79px 0 0 605px;font:400 52px/80px Lato,sans-serif;letter-spacing:-.1px;color:#202124;white-space:nowrap}
.page .date{letter-spacing:-3.700px}

/* explorer window */
.explorer{position:absolute;left:884px;top:270px;width:998px;height:929px;border:1px solid #777;background:#191919;color:#fff;box-shadow:0 5px 20px rgba(0,0,0,.4);display:flex;flex-direction:column}
.titlebar{height:37px;background:#000;display:flex}
.qat{width:316px;display:flex;align-items:center;padding-left:10px}
.f{width:13px;height:18px}
.qat .bar{width:2px;height:18px;background:#3f3f3f;margin-left:10px;margin-right:15px}
.qat .d{width:14px;height:18px;margin-right:11px}
.qat .drop{width:8px;height:8px;margin-left:12px}
.qat .drop+.bar{margin-left:12px}
.ctx{width:216px;height:33px;margin-top:4px;background:#eeec7d;color:#222;font-size:12.200px;line-height:35px;text-align:center}
.wtitle{margin-left:13px;line-height:37px;letter-spacing:-.1px;white-space:nowrap}
.wctl{margin-left:auto;display:flex;gap:44.500px;align-items:center;margin-right:23px}
.wctl svg{width:14px;height:14px;fill:none;stroke:#fff;stroke-width:1.200}
.rtabs{height:28px;background:#000;display:flex;align-items:center;font-size:12.200px;white-space:nowrap}
.rtabs>span{height:28px;line-height:28px;text-align:center}
.file{width:70px;background:#00a6b3;color:#000}
.home{width:82px;background:#202020;border:solid #383838;border-width:1px 1px 0}
.sharetab{width:107px}
.rtabs .view{width:57px;padding-right:3px}
.tools{width:216px;border:solid #222;border-width:0 1px;letter-spacing:.1px}
.fold{width:13px;height:10px;margin-left:418px}
.rtabs .help{width:19px;height:19px;line-height:19px;border-radius:50%;background:#0078d7;margin-left:10px;font-weight:700;font-size:13px}
.ribbon{height:114px;background:#202020;border-top:1px solid #2f2f2f;border-bottom:1px solid #2f2f2f;display:flex;font-size:12.200px}
.grp{display:flex;flex-direction:column;position:relative}
.grp::after{content:"";position:absolute;right:0;top:3px;bottom:4px;width:1px;background:#3a3a3a}
.g1{width:304px}.g2{width:274px}.g3{width:97px}.g4{width:110px}.g5{width:168px}
.body{height:91px;display:flex}
.glabel{text-align:center;color:#b8b8b8;line-height:24px;padding-right:3px}
.off{color:#b4b4b4}
.big{display:flex;flex-direction:column;align-items:center;padding-top:9px;text-align:center;line-height:16.500px}
.big>svg:first-child{height:36px}
.big>span{margin-top:7px}
.pin{width:136px;margin-left:3px}
.pin>svg:first-child{width:30px}
.copy{width:72px;letter-spacing:.1px}.copy>svg{width:30px}
.paste{width:58px;margin-left:1px}.paste>svg{width:26px}
.mini{width:20px;margin-left:3px;padding-top:5px;display:flex;flex-direction:column;gap:8px}
.cuts{margin-left:4px;padding-top:8px}
.mini svg{width:18px;height:18px}
.car,.mini .car{width:8px;height:5px}
.off .car{color:#5a5a5a}
.off .car.lit{color:#ccc}
.rows{padding-top:10px;white-space:nowrap}
.rows div{height:35px;display:flex;align-items:center;gap:4px}
.rows div>svg:first-child{width:16px;height:18px}
.left{margin-left:10px;width:127px;position:relative}
.left::after{content:"";position:absolute;right:0;top:16px;width:1px;height:54px;background:#4a4a4a}
.left .car{margin-bottom:4px}
.right{margin-left:9px}
.right .car{margin-left:3px}
.g3 .big{width:56px}.g3 .big>svg{width:24px}
.g4 .big{width:68px}.g4 .big>svg:first-child{width:28px}.g4 .big .car{margin-top:5px}
.g4 .big{white-space:nowrap}
.wide{width:36px;margin-left:1px;padding-top:4px;gap:0}
.wide div{height:26px;display:flex;align-items:center;gap:3px}
.tall{margin-left:1px}
.tall div{height:27px;gap:4px}
.sel{margin-left:7px;padding-top:4px}
.rows.sel div{height:26px;gap:4px}
.rows.sel div>svg{width:18px;height:18px}

.navbar{height:51px;display:flex;align-items:center}
.n1,.n2,.n4{width:16px;height:16px}
.n1{margin-left:15px}
.n2{margin-left:24px;color:#888}
.n3{width:10px;height:10px;margin-left:17px}
.n4{margin-left:12px}
.up{transform:rotate(90deg)}
.addr{width:585px;height:40px;margin-left:8px;border:1px solid #535353;display:flex;align-items:center;padding-left:4px;white-space:nowrap}
.addr span,.search span{padding-bottom:2px}
.laq{width:20px;text-align:center;color:#999;margin:0 6px 3px 5px}
.sep1,.sep2{width:10px;height:10px;transform:rotate(-90deg);color:#a0a0a0}
.sep1{margin:0 8px 0 10px}
.sep2{margin-left:9px}
.dd{width:12px;height:12px;margin-left:auto;color:#a0a0a0}
.refresh{width:38px;height:38px;margin-left:13px;border-left:1px solid #222;display:grid;place-items:center}
.refresh svg{width:16px;height:16px}
.search{width:253px;height:40px;margin-left:12px;border:1px solid #535353;display:flex;align-items:center;white-space:nowrap;overflow:hidden;color:#7d7d7d;letter-spacing:-.1px}
.search svg{width:18px;height:18px;margin:0 15px 0 16px}

.content{height:668px;display:flex}
.side{width:258px;display:flex;border-right:1px solid #2b2b2b}
.side ul{width:235px;padding-top:1px;overflow:hidden;flex:none}
.side li{height:30px;display:flex;align-items:center;gap:6px;font-size:14.200px;white-space:nowrap;letter-spacing:.05px}
.side li svg{width:18px;height:18px;margin-bottom:2px}
.side li svg.od{width:20px;height:15px;margin:0 -1px 2px -1px}
.side li span{padding-bottom:2px}
.side li svg.fi{width:13px;margin:0 4px 2px 1px}
.side li svg.low{height:14px;margin:2px 0 0}
.side li>svg svg{margin:0}
.side .sub{padding-left:41px}
.side .top{padding-left:31px;margin-top:10px}
.side .cur{background:linear-gradient(#333,#333) 1px 0/232px 28px no-repeat}
.vscroll{width:19px;background:#171717;display:flex;flex-direction:column;align-items:center;color:#7a7a7a}
.vscroll svg{width:12px;height:12px;margin-top:5px}
.vscroll .vup{transform:scaleY(-1);color:#666}
.vthumb{width:19px;height:452px;margin-top:178px;background:#4d4d4d}
.main{width:738px;background:#202020;overflow:hidden}
.files{height:647px;padding:9px 0 0 25px;display:grid;grid-template-columns:266px 174px 170px 103px}
.files ul{overflow:hidden}
.files li{height:26px;line-height:26px;padding-left:22px;white-space:pre;letter-spacing:.05px;background:url("data:image/svg+xml,%3Csvg xmlns='http://www.w3.org/2000/svg' viewBox='0 0 20 20'%3E%3Cpath d='M4.500.5h11l4 4v15h-15z' fill='%23fff' stroke='%23696969'/%3E%3Cpath d='M15 .5v5h4.500' fill='%23444' stroke='%23777'/%3E%3Cpath d='M0 2h13v6H0z' fill='%23626030'/%3E%3Cpath d='M3 3.500v3M5.500 6.500v-3h2v1.500h-2M11 3.500H9.500v3H11' fill='none' stroke='%23c8c69a' stroke-width='.8'/%3E%3Cg fill='none' stroke='%23444'%3E%3Cpath d='M7 10q5-3 9 1v4M17 17q-6 3-10-3' stroke-width='1.800'/%3E%3Ccircle cx='12' cy='13.500' r='1.800' stroke-width='1.200'/%3E%3C/g%3E%3C/svg%3E") 0 1px/20px 20px no-repeat}
.files .dir{background:url("data:image/svg+xml,%3Csvg xmlns='http://www.w3.org/2000/svg' viewBox='0 0 14 18'%3E%3Cpath d='M5 1h7l1 1v9l1 .5V16H5z' fill='%23f3cc62'/%3E%3Cpath d='M1 0l5 1.500V18L1 16z' fill='%23ffe39b'/%3E%3Cpath d='M1 0h11v1H4z' fill='%23e9bb4f'/%3E%3C/svg%3E") 2px 3px/13px 18px no-repeat;letter-spacing:.12px}
.hscroll{height:21px;background:#171717;display:flex;align-items:center;color:#7a7a7a}
.hscroll svg{width:12px;height:12px}
.hl{transform:rotate(90deg);margin:0 5px 0 6px}
.hr{transform:rotate(-90deg);margin-left:4px}
.hthumb{width:46px;height:19px;background:#4d4d4d}
.htrack{width:648px;height:21px;border-top:1px solid #000}
.status{height:29px;background:#333;display:flex;align-items:center;padding-left:17px;color:#ddd}
.status i{width:1px;height:14px;background:#fff;margin-left:13px}
.status svg{width:18px;height:15px}
.status i+svg{margin-left:auto}
.status svg:last-child{margin:0 10px 0 10px}

/* taskbar */
.taskbar{position:absolute;left:0;top:1390px;width:2560px;height:50px;background:linear-gradient(90deg,#29273b,#30263d 20%,#38233b 28%,#3e203a 55%,#431f36 80%,#481f2f);display:flex;color:#fff}
.sys{display:flex;align-items:center;gap:40px;padding-left:20px;width:183px}
.sys svg{width:20px;height:20px}
.apps{display:flex}
.apps div{width:62px;height:50px;display:grid;place-items:center;position:relative}
.apps svg{width:30px;height:30px}
.run::after{content:"";position:absolute;left:6px;bottom:0;width:51px;height:3px;background:#8fdfeb}
.on{background:linear-gradient(rgba(255,255,255,.2),rgba(255,255,255,.2)) 0 0/61px 50px no-repeat}
.run.on::after{left:0;width:61px}
.badge{position:absolute;left:29px;top:22px;width:20px;height:20px;border-radius:6px;background:#fb3a2f;font-size:13.500px;line-height:19px;text-align:center}
.adobe{font:700 14px "Noto Sans",sans-serif;fill:#31a8ff;text-anchor:middle}
.adobe.ps{font-size:15px}
.tray{margin-left:auto;display:flex;align-items:center}
.tray svg{fill:none;stroke:#fff;stroke-width:1.200}
.tray .wx{width:28px;height:20px;stroke:none}
.temp{width:115px;margin-left:11px;font-size:17.400px;white-space:pre;padding-top:2px}
.t1{width:18px;height:10px}
.tray .t2{width:18px;height:18px;margin-left:15px}
.tray .t3{width:20px;height:14px;margin-left:8px}
.tray .t4{width:20px;height:18px;margin-left:10px}
.tray .t5{width:20px;height:18px;margin-left:10px}
.lang{width:27px;margin-left:14px;font-size:13.700px}
.clock{width:76px;margin-left:14px;margin-right:-1px;display:flex;flex-direction:column;text-align:center;line-height:23px;font-size:14px;letter-spacing:-.25px}
.tray .t6{width:20px;height:20px;margin-left:21px}
.peek{width:1px;height:50px;background:#86707c;margin-left:25px;margin-right:5px}
```
